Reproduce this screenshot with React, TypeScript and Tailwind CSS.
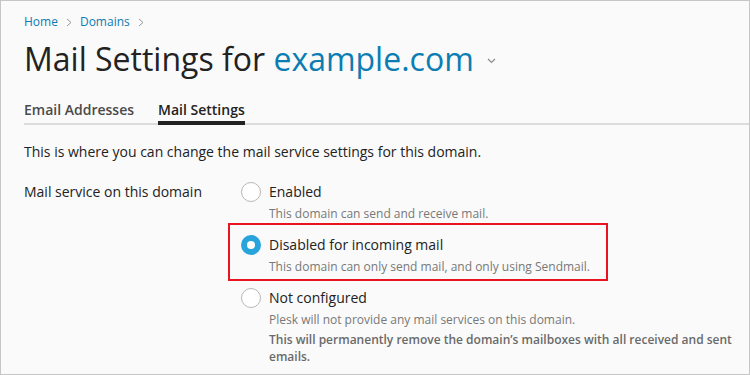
import React from 'react';

const Crumb = () => (
  <svg width="6" height="9" viewBox="0 0 6 9" className="mx-[8px] text-[#9a9a9a]">
    <polyline points="1,1 5,4.5 1,8" fill="none" stroke="currentColor" strokeWidth="1" />
  </svg>
);

const Radio = ({ checked }: { checked?: boolean }) =>
  checked ? (
    <span className="w-[20px] h-[20px] rounded-full bg-[#28a4dc] flex items-center justify-center shrink-0">
      <span className="w-[8px] h-[8px] rounded-full bg-white" />
    </span>
  ) : (
    <span className="w-[20px] h-[20px] rounded-full border border-[#b8b8b8] bg-white shrink-0" />
  );

const Option = ({ checked, label, children, highlight }: { checked?: boolean; label: string; children: React.ReactNode; highlight?: boolean }) => (
  <div className="relative flex gap-[8px] pb-[13px]">
    {highlight && (
      <div className="absolute left-[-13px] top-[-12px] w-[380px] h-[58px] border-2 border-[#e8141f] pointer-events-none" />
    )}
    <Radio checked={checked} />
    <div className="flex flex-col w-[480px]">
      <span className="text-[14px] leading-[20px] text-[#222]">{label}</span>
      <div className="mt-[3px] text-[12px] leading-[17px] text-[#787878]">{children}</div>
    </div>
  </div>
);

export default function App() {
  return (
    <div className="w-[750px] h-[375px] overflow-hidden border border-[#c6c6c6] bg-[#fafafa] pl-[23px] font-['Open_Sans',sans-serif]">
      {/* Breadcrumb */}
      <div className="flex items-center mt-[13px] text-[12px] leading-[16px] text-[#0b7cb4]">
        <span>Home</span>
        <Crumb />
        <span>Domains</span>
        <Crumb />
      </div>

      {/* Title */}
      <div className="flex items-center mt-[9px] text-[32px] leading-[40px] text-[#222]">
        <span>Mail Settings for&nbsp;</span>
        <span className="text-[#0b7db3]">example.com</span>
        <svg width="9" height="6" viewBox="0 0 9 6" className="ml-[13px] mt-[3px] text-[#8a8a8a]">
          <polyline points="1,1 4.5,4.5 8,1" fill="none" stroke="currentColor" strokeWidth="1.2" />
        </svg>
      </div>

      {/* Tabs */}
      <div className="flex gap-[24px] mt-[21px] border-b-2 border-[#dcdcdc] text-[14px] leading-[20px] font-semibold">
        <div className="pb-[3px] text-[#4a4a4a]">Email Addresses</div>
        <div className="pb-[1px] -mb-[2px] border-b-[4px] border-[#222] text-[#222]">Mail Settings</div>
      </div>

      <p className="mt-[17px] text-[14px] leading-[20px] text-[#222]">
        This is where you can change the mail service settings for this domain.
      </p>

      <div className="flex mt-[20px]">
        <div className="w-[217px] shrink-0 text-[14px] leading-[20px] text-[#222]">Mail service on this domain</div>
        <div className="flex flex-col">
          <Option label="Enabled">This domain can send and receive mail.</Option>
          <Option checked highlight label="Disabled for incoming mail">
            This domain can only send mail, and only using Sendmail.
          </Option>
          <Option label="Not configured">
            <p>Plesk will not provide any mail services on this domain.</p>
            <p className="mt-[3px] font-semibold text-[#6a6a6a]">
              This will permanently remove the domain’s mailboxes with all received and sent emails.
            </p>
          </Option>
        </div>
      </div>
    </div>
  );
}
